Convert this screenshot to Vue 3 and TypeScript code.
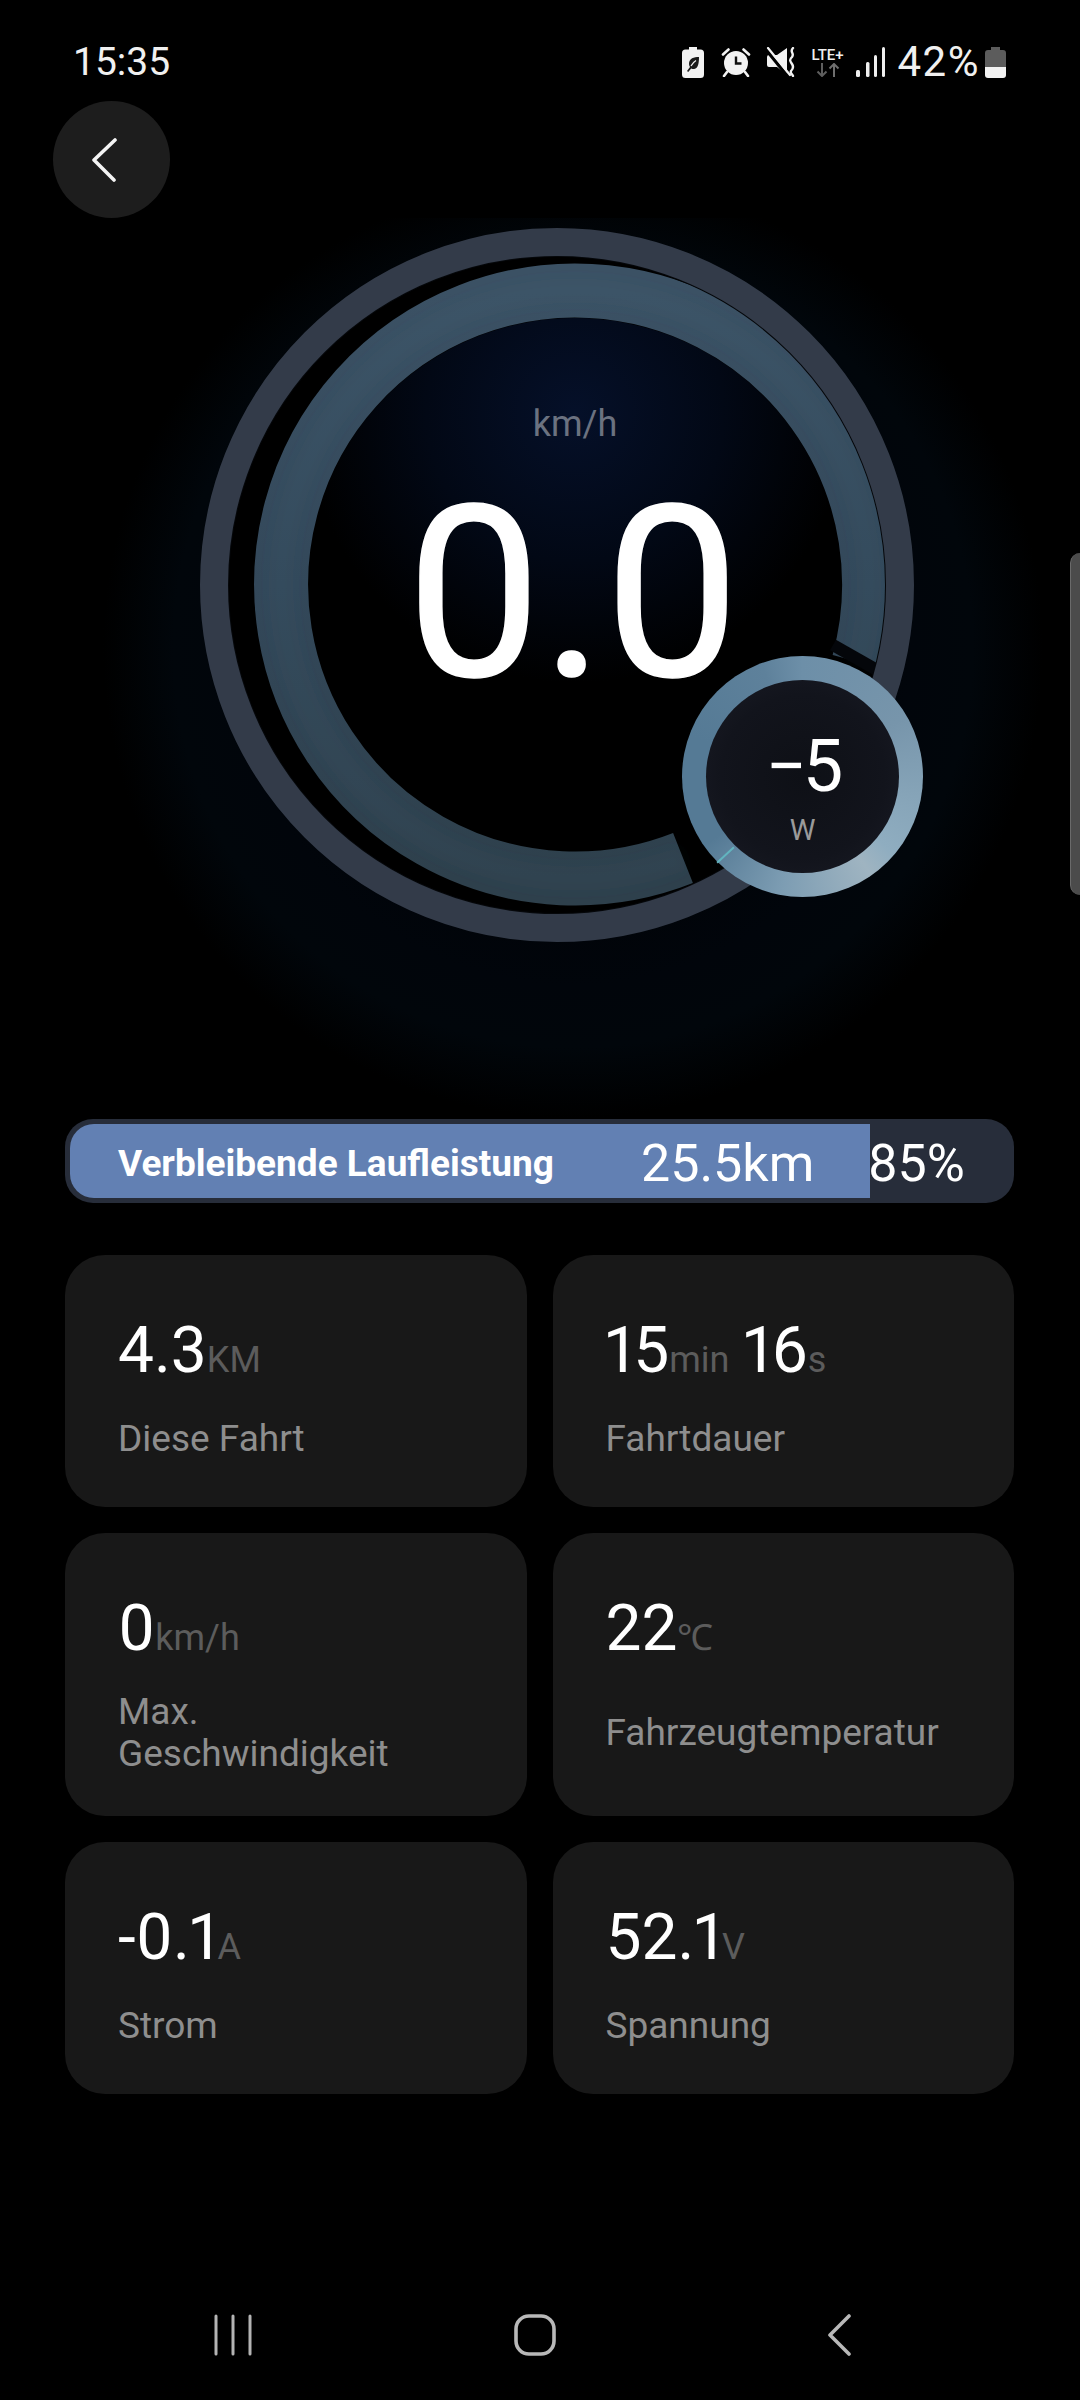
<template>
  <div class="screen">
    <div class="status-bar">
      <span class="clock">15:35</span>
      <div class="status-icons">
        <svg class="ic-leaf" width="22" height="31" viewBox="0 0 22 31">
          <path d="M7 0h8v2.500h3.500a3.500 3.500 0 0 1 3.500 3.500v21.500a3.500 3.500 0 0 1-3.500 3.500h-15a3.500 3.500 0 0 1-3.500-3.500v-21.500a3.500 3.500 0 0 1 3.500-3.500h3.500z" fill="#f2f2f2" />
          <path d="M17 10c-5 0-10 1-10 7 0 1 .3 2 1 3l-3 4 1.200 1 3-3.600c1 .6 2 .8 3 .6 4-.6 4.800-6 4.800-12z" fill="#1a1a1a" />
          <path d="M14 13.500c-2 1-3.500 3-5 5.500" stroke="#f2f2f2" stroke-width="1.300" fill="none" />
        </svg>
        <svg class="ic-alarm" width="30" height="30" viewBox="0 0 30 30">
          <circle cx="15" cy="16" r="12" fill="#f2f2f2" />
          <path d="M15 9.500v7h5.500" stroke="#111" stroke-width="2.400" fill="none" />
          <path d="M2 7.500 7.500 2.500M28 7.500 22.500 2.500M6 25l-3 4M24 25l3 4" stroke="#f2f2f2" stroke-width="2.600" stroke-linecap="round" fill="none" />
        </svg>
        <svg class="ic-mute" width="31" height="30" viewBox="0 0 31 30">
          <path d="M11 8 21 1v27L11 20H3a2 2 0 0 1-2-2V10a2 2 0 0 1 2-2z" fill="#f2f2f2" />
          <path d="M0 2.500 21 28.500" stroke="#000" stroke-width="3.400" />
          <path d="M2 1 24 28" stroke="#f2f2f2" stroke-width="2.200" stroke-linecap="round" />
          <path d="M27 1c-4 4 2 5-1 9-3 3-2 4 0 7 2 3 1 5-1 7-1 2 1 3 2 5" stroke="#f2f2f2" stroke-width="2.400" fill="none" stroke-linecap="round" />
        </svg>
        <div class="lte">
          <span class="lte-label">LTE+</span>
          <svg width="24" height="14" viewBox="0 0 24 14">
            <path d="M6 0v13M1.500 8.500 6 13l4.500-4.500" stroke="#5e5e5e" stroke-width="2" fill="none" />
            <path d="M18 14V1M13.500 5.500 18 1l4.500 4.500" stroke="#6e6e6e" stroke-width="2" fill="none" />
          </svg>
        </div>
        <svg class="ic-signal" width="29" height="30" viewBox="0 0 29 30">
          <rect x="0" y="23" width="4" height="7" rx="1.500" fill="#efefef" />
          <rect x="10" y="15" width="3.500" height="15" rx="1.500" fill="#efefef" />
          <rect x="18" y="8" width="3" height="22" rx="1.500" fill="#efefef" />
          <rect x="26" y="0" width="3" height="30" rx="1.500" fill="#efefef" />
        </svg>
        <span class="percent">42%</span>
        <svg class="ic-battery" width="21" height="31" viewBox="0 0 21 31">
          <path d="M6 0h9v3h3a3 3 0 0 1 3 3v14h-21v-14a3 3 0 0 1 3-3h3z" fill="#5c5c5c" />
          <path d="M0 20h21v8a3 3 0 0 1-3 3h-15a3 3 0 0 1-3-3z" fill="#f2f2f2" />
        </svg>
      </div>
    </div>

    <button class="back-btn" aria-label="back">
      <svg width="26" height="44" viewBox="0 0 26 44">
        <path d="M24 2 3 22l20 20" stroke="#f4f4f4" stroke-width="3.600" fill="none" stroke-linecap="round" stroke-linejoin="round" />
      </svg>
    </button>

    <div class="gauge">
      <svg class="gauge-rings" width="1080" height="901" viewBox="0 0 1080 901">
        <defs>
          <radialGradient id="glow" cx="573" cy="430" r="470" gradientUnits="userSpaceOnUse">
            <stop offset="0" stop-color="#000" />
            <stop offset="0.72" stop-color="#01050b" />
            <stop offset="0.85" stop-color="#01060b" />
            <stop offset="1" stop-color="#000" />
          </radialGradient>
          <radialGradient id="innerGlow" cx="575" cy="195" r="270" gradientUnits="userSpaceOnUse">
            <stop offset="0" stop-color="#051029" />
            <stop offset="0.55" stop-color="#020815" />
            <stop offset="1" stop-color="#000" />
          </radialGradient>
          <linearGradient id="arcFill" x1="0" y1="0" x2="0" y2="1">
            <stop offset="0" stop-color="#3b5164" />
            <stop offset="0.5" stop-color="#33485a" />
            <stop offset="1" stop-color="#2e404c" />
          </linearGradient>
          <filter id="soft" x="-10%" y="-10%" width="120%" height="120%">
            <feGaussianBlur stdDeviation="7" />
          </filter>
        </defs>
        <rect x="0" y="0" width="1080" height="901" fill="url(#glow)" />
        <circle cx="557" cy="367" r="330" fill="#000" />
        <circle cx="575" cy="367" r="267" fill="url(#innerGlow)" />
        <path d="M 683 640 A 294 294 0 1 1 858.700 444" fill="none" stroke="url(#arcFill)" stroke-width="54" />
        <path d="M 683 640 A 294 294 0 1 1 858.700 444" fill="none" stroke="#5a7590" stroke-opacity="0.06" stroke-width="24" filter="url(#soft)" />
        <path d="M 833 427 L 877 452" stroke="#04060a" stroke-width="12" />
        <circle cx="557" cy="367" r="329" fill="none" stroke="#05070a" stroke-width="2" />
        <circle cx="557" cy="367" r="343" fill="none" stroke="#333b49" stroke-width="28" />
      </svg>
      <div class="speed-unit">km/h</div>
      <div class="speed">0.0</div>
      <div class="power">
        <div class="power-inner">
          <span class="power-value">−5</span>
          <span class="power-unit">W</span>
        </div>
        <div class="power-tick"></div>
      </div>
    </div>

    <div class="range-bar">
      <div class="range-track">
        <div class="range-fill" :style="{ width: rangeFill + '%' }"></div>
        <span class="range-label">Verbleibende Laufleistung</span>
        <span class="range-km">25.5km</span>
        <span class="range-pct">85%</span>
      </div>
    </div>

    <div class="cards">
      <div v-for="c in cards" :key="c.label" class="card">
        <div class="value">
          <template v-for="(p, i) in c.parts" :key="i">
            <span class="num">{{ p[0] }}</span><span class="unit">{{ p[1] }}</span>
          </template>
        </div>
        <div class="label"><span>{{ c.label }}</span></div>
      </div>
    </div>

    <div class="nav">
      <svg width="38" height="42" viewBox="0 0 38 42">
        <path d="M2 2v38M19 2v38M36 2v38" stroke="#b4b4b4" stroke-width="3" fill="none" stroke-linecap="round" />
      </svg>
      <svg class="nav-home" width="42" height="42" viewBox="0 0 42 42">
        <rect x="2" y="2" width="38" height="38" rx="13" stroke="#b8b8b8" stroke-width="3.600" fill="none" />
      </svg>
      <svg class="nav-back" width="24" height="42" viewBox="0 0 24 42">
        <path d="M22 2 3 21l19 19" stroke="#b8b8b8" stroke-width="3.600" fill="none" stroke-linecap="round" stroke-linejoin="round" />
      </svg>
    </div>

    <div class="side-handle"></div>
  </div>
</template>

<script setup lang="ts">
interface Card {
  label: string
  parts: [string, string][]
}

const rangeFill = 85.2

const cards: Card[] = [
  { label: 'Diese Fahrt', parts: [['4.3', 'KM']] },
  { label: 'Fahrtdauer', parts: [['15', 'min'], ['16', 's']] },
  { label: 'Max. Geschwindigkeit', parts: [['0', 'km/h']] },
  { label: 'Fahrzeugtemperatur', parts: [['22', '℃']] },
  { label: 'Strom', parts: [['-0.1', 'A']] },
  { label: 'Spannung', parts: [['52.1', 'V']] }
]
</script>

<style>
html,
body {
  background: #000;
}
</style>

<style scoped>
.screen {
  position: relative;
  width: 1080px;
  height: 2400px;
  background: #000;
  color: #fff;
  font-family: Roboto, "Liberation Sans", sans-serif;
  display: flex;
  flex-direction: column;
  overflow: hidden;
}

.status-bar {
  height: 101px;
  flex-shrink: 0;
  padding: 40px 74px 0 73px;
  box-sizing: border-box;
  display: flex;
  justify-content: space-between;
  align-items: flex-start;
}

.clock {
  font-size: 39px;
  line-height: 44px;
  color: #f0f0f0;
}

.status-icons {
  display: flex;
  align-items: center;
  height: 44px;
}

.ic-alarm {
  margin-left: 17px;
}

.ic-mute {
  margin-left: 15px;
}

.lte {
  margin-left: 12px;
  width: 38px;
  display: flex;
  flex-direction: column;
  align-items: center;
}

.lte-label {
  font-size: 15px;
  line-height: 16px;
  color: #eee;
  font-weight: 500;
}

.ic-signal {
  margin-left: 9px;
}

.percent {
  margin-left: 13px;
  font-size: 42px;
  letter-spacing: 1.500px;
  line-height: 44px;
  color: #f0f0f0;
}

.ic-battery {
  margin-left: 5px;
}

.back-btn {
  width: 117px;
  height: 117px;
  margin-left: 53px;
  border: 0;
  padding: 0 15px 0 0;
  border-radius: 50%;
  background: #1d1d1d;
  display: flex;
  align-items: center;
  justify-content: center;
  position: relative;
  z-index: 2;
  flex-shrink: 0;
}

.gauge {
  position: relative;
  height: 901px;
  flex-shrink: 0;
}

.gauge-rings {
  position: absolute;
  top: 0;
  left: 0;
}

.speed-unit {
  position: absolute;
  left: 475px;
  width: 200px;
  top: 185px;
  text-align: center;
  font-size: 36px;
  line-height: 42px;
  color: #6b7280;
}

.speed {
  position: absolute;
  left: 273px;
  width: 600px;
  top: 236px;
  text-align: center;
  font-size: 240px;
  line-height: 280px;
  -webkit-text-stroke: 1.500px #fff;
}

.power {
  position: absolute;
  left: 682px;
  top: 438px;
  width: 241px;
  height: 241px;
  box-sizing: border-box;
  padding: 24px;
  border-radius: 50%;
  background: conic-gradient(#6d8fa8 0deg, #7795ab 60deg, #86a4b8 100deg, #8fadc0 130deg, #9fb4c1 145deg, #7d9db3 190deg, #557a95 235deg, #557a95 290deg, #5e819b 340deg, #6d8fa8 360deg);
}

.power-inner {
  width: 100%;
  height: 100%;
  border-radius: 50%;
  background: radial-gradient(circle, #0e1016 0%, #12141c 60%, #1a1c26 100%);
  display: flex;
  flex-direction: column;
  align-items: center;
}

.power-value {
  margin-top: 45px;
  font-size: 72px;
  line-height: 84px;
  letter-spacing: -4px;
}

.power-unit {
  margin-top: 4px;
  font-size: 29px;
  line-height: 34px;
  color: #9a9a9a;
}

.power-tick {
  position: absolute;
  left: 32px;
  top: 198px;
  width: 23px;
  height: 2px;
  background: #62b4bf;
  transform: rotate(-43deg);
}

.range-bar {
  flex-shrink: 0;
  margin-left: 65px;
  width: 949px;
  height: 84px;
  box-sizing: border-box;
  padding: 5px;
  border-radius: 28px;
  background: #272d3a;
}

.range-track {
  position: relative;
  height: 74px;
  box-sizing: border-box;
  padding: 5px 0 0 48px;
  display: flex;
  align-items: center;
}

.range-fill {
  position: absolute;
  left: 0;
  top: 0;
  bottom: 0;
  background: #6280b3;
  border-radius: 24px 0 0 24px;
}

.range-label,
.range-km,
.range-pct {
  position: relative;
  white-space: nowrap;
}

.range-label {
  font-size: 37px;
  font-weight: 700;
}

.range-km {
  margin-left: 87px;
  font-size: 52px;
}

.range-pct {
  margin-left: 54px;
  font-size: 52px;
}

.cards {
  flex-shrink: 0;
  margin: 52px 0 0 65px;
  width: 949px;
  display: grid;
  grid-template-columns: 1fr 1fr;
  grid-template-rows: 252px 283px 252px;
  gap: 26px;
}

.card {
  background: #181818;
  border-radius: 40px;
  padding: 58px 53px 18px;
  box-sizing: border-box;
  display: flex;
  flex-direction: column;
}

.value {
  height: 76px;
  line-height: 76px;
  white-space: nowrap;
}

.num {
  font-size: 64px;
  font-variant-numeric: proportional-nums;
}

.num:nth-of-type(n + 2) {
  margin-left: 14px;
}

.unit {
  font-size: 36px;
  color: #5c5c5c;
}

.label {
  flex: 1;
  display: flex;
  align-items: center;
  font-size: 37px;
  line-height: 42px;
  color: #8e8e8e;
}

.label span {
  max-width: 345px;
}

.nav {
  margin-top: auto;
  padding: 0 0 44px 214px;
  display: flex;
  align-items: center;
}

.nav-home {
  margin-left: 262px;
}

.nav-back {
  margin-left: 271px;
}

.side-handle {
  position: absolute;
  right: 0;
  top: 553px;
  width: 10px;
  height: 342px;
  box-sizing: border-box;
  background: #4b4b4b;
  border-left: 1px solid #6a6a6a;
  border-radius: 10px 0 0 10px;
}
</style>
